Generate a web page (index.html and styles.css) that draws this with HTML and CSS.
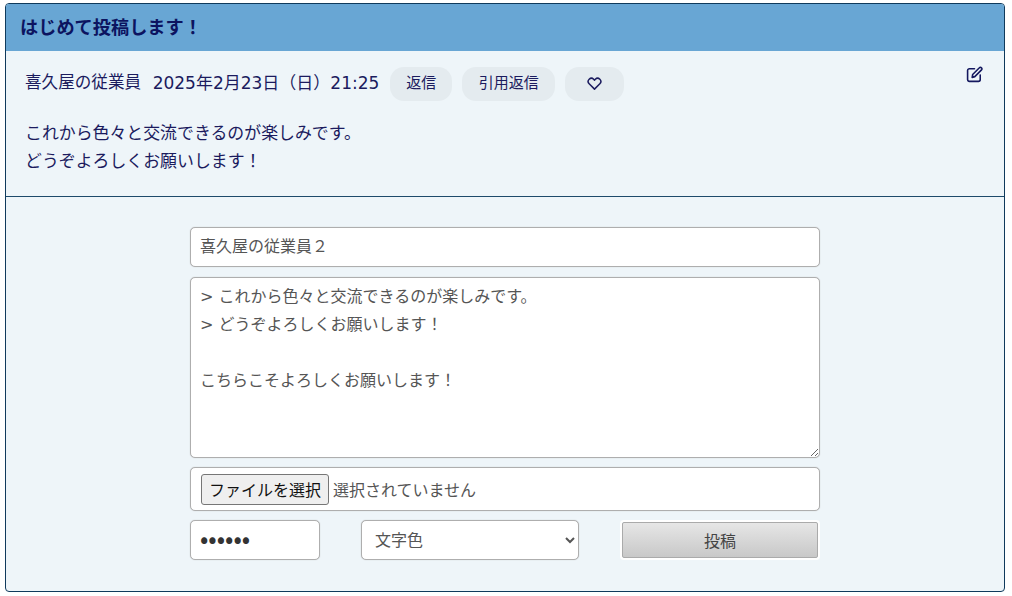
FILE: index.html
```html
<!DOCTYPE html>
<html lang="ja">
<head>
<meta charset="utf-8">
<title>はじめて投稿します！</title>
<link rel="stylesheet" href="styles.css">
</head>
<body>
<article class="card">
  <h1 class="card-title">はじめて投稿します！</h1>
  <section class="post">
    <div class="post-meta">
      <span class="author">喜久屋の従業員</span>
      <span class="date">2025年2月23日（日）21:25</span>
      <button class="pill pill-reply" type="button"><span class="pill-label">返信</span></button>
      <button class="pill pill-quote" type="button"><span class="pill-label">引用返信</span></button>
      <button class="pill pill-like" type="button" aria-label="いいね">
        <svg class="heart" viewBox="0 0 16 16" width="15" height="15"><path d="M8 14 2.3 8.3a3.4 3.4 0 0 1 0-4.8 3.4 3.4 0 0 1 4.8 0l.9.9.9-.9a3.4 3.4 0 0 1 4.8 0 3.4 3.4 0 0 1 0 4.8z" fill="none" stroke="currentColor" stroke-width="1.6" stroke-linejoin="round"/></svg>
      </button>
      <svg class="edit" viewBox="0 0 16 16" width="17" height="17"><path d="M8 2.6H3.2A1.7 1.7 0 0 0 1.500 4.300v8.500a1.700 1.700 0 0 0 1.700 1.700h8.500a1.700 1.700 0 0 0 1.700-1.700V8.500" fill="none" stroke="currentColor" stroke-width="1.500" stroke-linecap="round"/><path d="M5.800 10.700l.5-2.700 6.300-6.300a1.300 1.300 0 0 1 1.900 0l.1.100a1.300 1.300 0 0 1 0 1.900L8.300 10z" fill="none" stroke="currentColor" stroke-width="1.500" stroke-linejoin="round"/></svg>
    </div>
    <p class="post-body">これから色々と交流できるのが楽しみです。<br>どうぞよろしくお願いします！</p>
  </section>
  <form class="reply-form">
    <input class="field field-name" type="text" value="喜久屋の従業員２">
    <textarea class="field field-text">&gt; これから色々と交流できるのが楽しみです。
&gt; どうぞよろしくお願いします！

こちらこそよろしくお願いします！</textarea>
    <div class="field field-file">
      <button class="file-button" type="button">ファイルを選択</button>
      <span class="file-name">選択されていません</span>
    </div>
    <div class="form-row">
      <input class="field field-pass" type="password" value="123456">
      <select class="field field-color"><option>文字色</option></select>
      <button class="submit" type="button">投稿</button>
    </div>
  </form>
</article>
</body>
</html>
```
FILE: styles.css
```css
* { box-sizing: border-box; }
html, body { margin: 0; padding: 0; }
body {
  padding: 3px 7px 0 5px;
  background: #fff;
  font-family: "DejaVu Sans", "Noto Sans CJK JP", sans-serif;
  color: #1b1b5e;
}
.card {
  width: 1000px;
  height: 589px;
  border: 1px solid #0f3a5c;
  border-radius: 4px;
  background: #eef5f9;
  overflow: hidden;
}
.card-title {
  margin: 0;
  height: 47px;
  padding: 0 0 0 14px;
  background: #68a6d4;
  color: #0c1460;
  font: bold 18.200px/45px "Noto Sans CJK JP", sans-serif;
}
.post {
  height: 146px;
  padding: 16px 21px 0 19px;
  border-bottom: 1px solid #1d4a6b;
}
.post-meta {
  display: flex;
  align-items: center;
  height: 34px;
  font-size: 17px;
}
.author { margin: 0 0 6px 0; font-family: "Noto Sans CJK JP", sans-serif; font-size: 16.600px; }
.date { margin: 0 11px 6px 11.500px; font-size: 17px; }
.pill {
  height: 34px;
  margin-right: 10px;
  padding: 0;
  border: 0;
  border-radius: 14px;
  background: #e4ebef;
  color: #1b1b5e;
  font: 15px "Noto Sans CJK JP", sans-serif;
  display: flex;
  align-items: center;
  justify-content: center;
}
.pill-label { margin-bottom: 5px; }
.pill-reply { width: 62px; }
.pill-quote { width: 93px; }
.pill-like { width: 59px; padding-bottom: 2px; }
.edit { margin: -19px 0 0 auto; color: #14185f; }
.post-body {
  margin: 17px 0 0;
  font: 16.900px/28px "Noto Sans CJK JP", sans-serif;
}
.reply-form {
  width: 630px;
  margin: 30px 0 0 184px;
  display: flex;
  flex-direction: column;
}
.field {
  border: 1px solid #aeaeae;
  border-radius: 5px;
  box-shadow: 0 0 1px #b8b8b8;
  background: #fff;
  color: #555;
  font: 16px "DejaVu Sans", "Noto Sans CJK JP", sans-serif;
  outline: none;
}
.field-name { height: 40px; padding: 0 9px 4px; }
.field-text {
  display: block;
  height: 181px;
  margin-top: 10px;
  padding: 5px 9px;
  line-height: 28px;
  resize: vertical;
}
.field-file {
  height: 44px;
  margin-top: 9px;
  padding: 0 10px;
  display: flex;
  align-items: center;
}
.file-button {
  width: 128px;
  height: 31px;
  padding: 0;
  border: 1px solid #767676;
  border-radius: 3px;
  background: #efefef;
  color: #111;
  font: 16px "Noto Sans CJK JP", sans-serif;
}
.file-name { margin-left: 4px; }
.form-row {
  margin-top: 9px;
  display: flex;
  align-items: flex-start;
}
.field-pass {
  width: 130px;
  height: 40px;
  padding: 0 9px 6px;
  color: #333;
  font: 24.600px "Noto Sans CJK JP", sans-serif;
}
.field-color {
  width: 218px;
  height: 40px;
  margin-left: 41px;
  padding: 0 9px;
}
.submit {
  width: 196px;
  height: 36px;
  margin: 2px 0 0 43px;
  padding: 0;
  border: 1px solid #aaa;
  border-radius: 2px;
  background: linear-gradient(#e6e6e6, #c8c8c8);
  box-shadow: 0 0 0 2px #fff;
  color: #444;
  font: 16px "Noto Sans CJK JP", sans-serif;
}
```
